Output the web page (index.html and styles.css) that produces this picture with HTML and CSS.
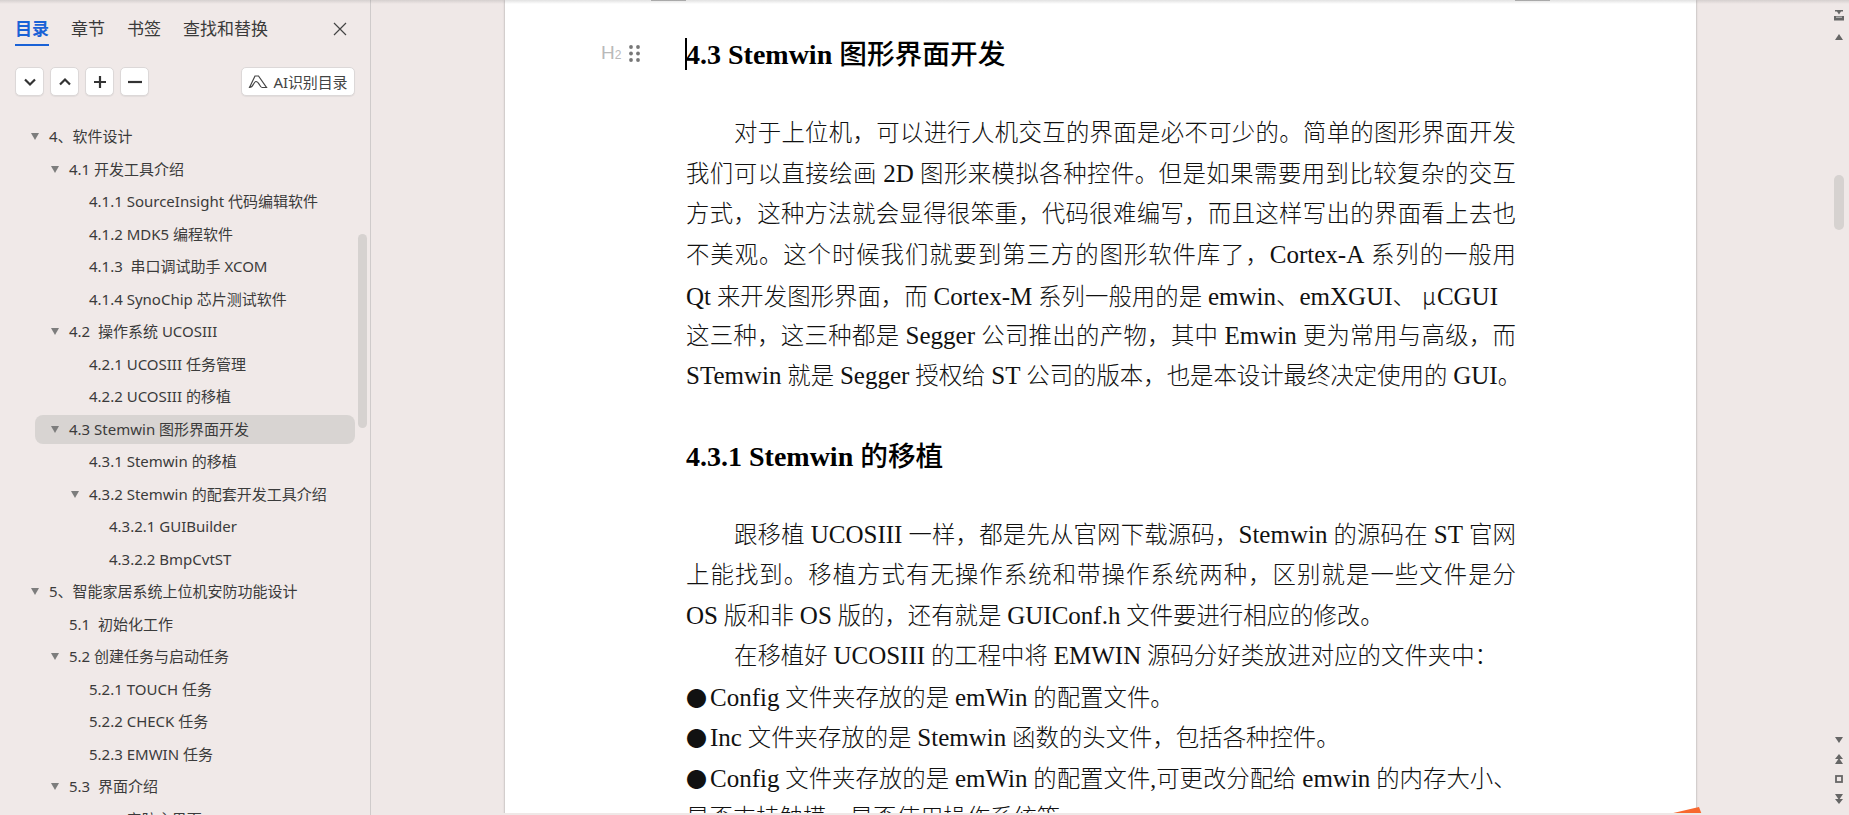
FILE: index.html
```html
<!DOCTYPE html>
<html lang="zh-CN">
<head>
<meta charset="utf-8">
<title>目录</title>
<link rel="stylesheet" href="styles.css">
</head>
<body>
<div class="app">
  <aside class="sidebar">
    <div class="tabs">
      <span class="tab tab-active">目录</span>
      <span class="tab">章节</span>
      <span class="tab">书签</span>
      <span class="tab">查找和替换</span>
      <svg class="close" width="14" height="14" viewBox="0 0 14 14"><path d="M1 1L13 13M13 1L1 13" stroke="#444" stroke-width="1.2" fill="none"/></svg>
    </div>
    <div class="tools">
      <button class="tool"><svg width="14" height="14" viewBox="0 0 14 14"><path d="M2 4.5L7 9.5L12 4.5" stroke="#333" stroke-width="2.2" fill="none"/></svg></button>
      <button class="tool"><svg width="14" height="14" viewBox="0 0 14 14"><path d="M2 9.5L7 4.5L12 9.5" stroke="#333" stroke-width="2.2" fill="none"/></svg></button>
      <button class="tool"><svg width="14" height="14" viewBox="0 0 14 14"><path d="M1 7H13M7 1V13" stroke="#333" stroke-width="2.2" fill="none"/></svg></button>
      <button class="tool"><svg width="16" height="14" viewBox="0 0 16 14"><path d="M1 7H15" stroke="#333" stroke-width="2.2" fill="none"/></svg></button>
      <button class="ai"><svg width="20" height="15" viewBox="0 0 20 15"><path d="M1.5 13.5L7 2H10.5L18.5 13.5H14C12 13.5 11 7.5 8 7.5C5.5 7.5 5.5 13.5 1.5 13.5Z" stroke="#444" stroke-width="1.2" fill="none"/></svg>AI识别目录</button>
    </div>
    <nav class="tree">
      <div class="row lv1"><i class="tri"></i>4、软件设计</div>
      <div class="row lv2"><i class="tri"></i>4.1 开发工具介绍</div>
      <div class="row lv3">4.1.1 SourceInsight 代码编辑软件</div>
      <div class="row lv3">4.1.2 MDK5 编程软件</div>
      <div class="row lv3">4.1.3&nbsp; 串口调试助手 XCOM</div>
      <div class="row lv3">4.1.4 SynoChip 芯片测试软件</div>
      <div class="row lv2"><i class="tri"></i>4.2&nbsp; 操作系统 UCOSIII</div>
      <div class="row lv3">4.2.1 UCOSIII 任务管理</div>
      <div class="row lv3">4.2.2 UCOSIII 的移植</div>
      <div class="row lv2 row-active"><i class="tri"></i>4.3 Stemwin 图形界面开发</div>
      <div class="row lv3">4.3.1 Stemwin 的移植</div>
      <div class="row lv3"><i class="tri"></i>4.3.2 Stemwin 的配套开发工具介绍</div>
      <div class="row lv4">4.3.2.1 GUIBuilder</div>
      <div class="row lv4">4.3.2.2 BmpCvtST</div>
      <div class="row lv1"><i class="tri"></i>5、智能家居系统上位机安防功能设计</div>
      <div class="row lv2">5.1&nbsp; 初始化工作</div>
      <div class="row lv2"><i class="tri"></i>5.2 创建任务与启动任务</div>
      <div class="row lv3">5.2.1 TOUCH 任务</div>
      <div class="row lv3">5.2.2 CHECK 任务</div>
      <div class="row lv3">5.2.3 EMWIN 任务</div>
      <div class="row lv2"><i class="tri"></i>5.3&nbsp; 界面介绍</div>
      <div class="row lv3">5.3.1 安防主界面</div>
    </nav>
    <div class="tree-thumb"></div>
  </aside>

  <main class="workspace">
    <article class="page">
      <i class="mark mark-left"></i><i class="mark mark-right"></i>
      <h2 class="h h-first">
        <span class="h-marker"><span class="h-tag">H<sub>2</sub></span>
          <svg width="11" height="17" viewBox="0 0 11 17"><g fill="#777"><circle cx="2" cy="2" r="1.9"/><circle cx="9" cy="2" r="1.9"/><circle cx="2" cy="8.5" r="1.9"/><circle cx="9" cy="8.5" r="1.9"/><circle cx="2" cy="15" r="1.9"/><circle cx="9" cy="15" r="1.9"/></g></svg>
        </span>
        <i class="caret"></i>4.3 Stemwin <span class="h-cjk">图形界面开发</span>
      </h2>
      <div class="para">
        <div class="line indent">对于上位机，可以进行人机交互的界面是必不可少的。简单的图形界面开发</div>
        <div class="line">我们可以直接绘画 <span class="la">2D</span> 图形来模拟各种控件。但是如果需要用到比较复杂的交互</div>
        <div class="line">方式，这种方法就会显得很笨重，代码很难编写，而且这样写出的界面看上去也</div>
        <div class="line">不美观。这个时候我们就要到第三方的图形软件库了，<span class="la">Cortex-A</span> 系列的一般用</div>
        <div class="line line-short"><span class="la">Qt</span> 来开发图形界面，而 <span class="la">Cortex-M</span> 系列一般用的是 <span class="la">emwin</span>、<span class="la">emXGUI</span>、 <span class="mu">μ</span><span class="la">CGUI</span></div>
        <div class="line">这三种，这三种都是 <span class="la">Segger</span> 公司推出的产物，其中 <span class="la">Emwin</span> 更为常用与高级，而</div>
        <div class="line"><span class="la">STemwin</span> 就是 <span class="la">Segger</span> 授权给 <span class="la">ST</span> 公司的版本，也是本设计最终决定使用的 <span class="la">GUI</span>。</div>
      </div>
      <h3 class="h h-second">4.3.1 Stemwin <span class="h-cjk">的移植</span></h3>
      <div class="para">
        <div class="line indent">跟移植 <span class="la">UCOSIII</span> 一样，都是先从官网下载源码，<span class="la">Stemwin</span> 的源码在 <span class="la">ST</span> 官网</div>
        <div class="line">上能找到。移植方式有无操作系统和带操作系统两种，区别就是一些文件是分</div>
        <div class="line line-end"><span class="la">OS</span> 版和非 <span class="la">OS</span> 版的，还有就是 <span class="la">GUIConf.h</span> 文件要进行相应的修改。</div>
        <div class="line line-end indent">在移植好 <span class="la">UCOSIII</span> 的工程中将 <span class="la">EMWIN</span> 源码分好类放进对应的文件夹中：</div>
        <div class="line line-end"><span class="dot">●</span><span class="la">Config</span> 文件夹存放的是 <span class="la">emWin</span> 的配置文件。</div>
        <div class="line line-end"><span class="dot">●</span><span class="la">Inc</span> 文件夹存放的是 <span class="la">Stemwin</span> 函数的头文件，包括各种控件。</div>
        <div class="line"><span class="dot">●</span><span class="la">Config</span> 文件夹存放的是 <span class="la">emWin</span> 的配置文件,可更改分配给 <span class="la">emwin</span> 的内存大小、</div>
        <div class="line line-end">是否支持触摸，是否使用操作系统等。</div>
      </div>
    </article>
    <div class="rail">
      <div class="rail-top">
        <svg width="10" height="11" viewBox="0 0 10 11"><path d="M1 0H9V1.5H7L5 4.5L3 1.5H1Z M0 6H10V10.5H0Z" fill="#666"/><path d="M3 6.5V8M5 6.5V8M7 6.5V8" stroke="#eee" stroke-width="1"/></svg>
        <svg width="8" height="6" viewBox="0 0 8 6"><path d="M4 0L8 6H0Z" fill="#666"/></svg>
      </div>
      <div class="rail-thumb"></div>
      <div class="rail-bottom">
        <svg width="8" height="6" viewBox="0 0 8 6"><path d="M0 0H8L4 6Z" fill="#666"/></svg>
        <svg width="8" height="10" viewBox="0 0 8 10"><path d="M4 0L8 5H0ZM4 4L8 10H0Z" fill="#666"/></svg>
        <svg width="8" height="8" viewBox="0 0 8 8"><rect x="1" y="1" width="6" height="6" fill="none" stroke="#666" stroke-width="1.8"/></svg>
        <svg width="8" height="10" viewBox="0 0 8 10"><path d="M0 0H8L4 6ZM0 5H8L4 10Z" fill="#666"/></svg>
      </div>
    </div>
    <svg class="corner" width="34" height="8" viewBox="0 0 34 8"><path d="M0 7L30 0L33 8H0Z" fill="#f7682f"/></svg>
  </main>
</div>
</body>
</html>
```

FILE: styles.css
```css
html, body {
  margin: 0;
  height: 100%;
  overflow: hidden;
}
body {
  background: #efe8e7;
  font-family: "Noto Sans", "Noto Sans CJK SC", sans-serif;
  color: #333;
}
.app {
  display: flex;
  height: 815px;
  position: relative;
}
.app::after {
  content: "";
  position: absolute;
  left: 0;
  right: 0;
  top: 0;
  height: 4px;
  background: linear-gradient(rgba(120, 120, 120, .22), rgba(120, 120, 120, 0));
  pointer-events: none;
}

/* sidebar */
.sidebar {
  width: 371px;
  flex: none;
  box-sizing: border-box;
  border-right: 1px solid #cfcbcb;
  background: #f0e9e8;
  position: relative;
  overflow: hidden;
}
.tabs {
  display: flex;
  align-items: flex-start;
  gap: 22px;
  padding: 16px 0 0 15px;
  height: 44px;
  box-sizing: border-box;
  position: relative;
}
.tab {
  font-size: 17px;
  line-height: 25px;
  height: 28px;
  color: #3a3a3a;
}
.tab-active {
  color: #1a62d6;
  font-weight: 700;
  border-bottom: 2px solid #1a62d6;
}
.close {
  position: absolute;
  left: 333px;
  top: 22px;
}
.tools {
  display: flex;
  gap: 6px;
  padding: 23px 15px 0 15px;
}
.tool, .ai {
  height: 29px;
  background: #fff;
  border: 1px solid #dcd8d8;
  border-radius: 5px;
  box-sizing: border-box;
  padding: 0;
  display: flex;
  align-items: center;
  justify-content: center;
  box-shadow: 0 1px 1px rgba(0, 0, 0, .06);
}
.tool {
  width: 29px;
}
.ai {
  margin-left: auto;
  width: 114px;
  gap: 5px;
  font: 15px "Noto Sans", "Noto Sans CJK SC", sans-serif;
  color: #444;
  letter-spacing: -.1px;
}
.tree {
  display: flex;
  flex-direction: column;
  gap: 3.5px;
  margin-top: 26px;
  width: 320px;
  margin-left: 35px;
  white-space: nowrap;
}
.row {
  height: 29px;
  flex: none;
  line-height: 29px;
  font-size: 15px;
  color: #3b3b3b;
  position: relative;
  border-radius: 8px;
}
.lv1 { padding-left: 14px; }
.lv2 { padding-left: 34px; }
.lv3 { padding-left: 54px; }
.lv4 { padding-left: 74px; }
.row-active {
  background: #d8d4d2;
}
.tri {
  position: absolute;
  top: 11px;
  width: 0;
  height: 0;
  border-left: 4.5px solid transparent;
  border-right: 4.5px solid transparent;
  border-top: 7px solid #7d7d7d;
}
.lv1 .tri { left: -4px; }
.lv2 .tri { left: 16px; }
.lv3 .tri { left: 36px; }
.tree-thumb {
  position: absolute;
  left: 358px;
  top: 234px;
  width: 9px;
  height: 194px;
  border-radius: 5px;
  background: #d6d2d0;
}

/* document */
.workspace {
  flex: 1;
  min-width: 0;
  display: flex;
  padding-left: 134px;
  position: relative;
  overflow: hidden;
  border-bottom: 2px solid transparent;
}
.workspace::after {
  content: "";
  position: absolute;
  left: 1326px;
  right: 0;
  bottom: -1px;
  height: 1px;
  background: #c3cedb;
}
.page {
  width: 1191px;
  flex: none;
  box-sizing: border-box;
  height: 900px;
  padding: 0 180px 0 181px;
  background: #fff;
  position: relative;
  box-shadow: 0 0 2px rgba(90, 90, 90, .55);
  font-family: "Liberation Serif", "Noto Sans CJK SC", serif;
  color: #000;
}
.mark {
  position: absolute;
  top: 0;
  width: 35px;
  height: 1px;
  background: #b5b5b5;
}
.mark-left { left: 146px; }
.mark-right { right: 146px; }
.h {
  margin: 0;
  font-size: 28px;
  font-weight: 700;
  line-height: 36px;
  position: relative;
}
.h-cjk {
  font-family: "Noto Sans CJK SC", sans-serif;
  font-weight: 500;
  font-size: 27.7px;
}
.h-first {
  padding-top: 34px;
}
.h-second {
  margin-top: 39px;
}
.h-marker {
  position: absolute;
  left: -85px;
  top: 44px;
  display: flex;
  align-items: center;
  gap: 8px;
}
.h-tag {
  font: 400 19px "Liberation Sans", sans-serif;
  line-height: 18px;
  color: #b9b9b9;
  display: flex;
  align-items: flex-end;
}
.h-tag sub {
  font-size: 12px;
  line-height: 13px;
  vertical-align: baseline;
}
.caret {
  position: absolute;
  left: -1px;
  top: 38px;
  width: 2px;
  height: 32px;
  background: #000;
}
.para {
  margin-top: 40px;
  font-size: 23.4px;
  font-weight: 300;
  color: #111;
}
.h-second + .para {
  margin-top: 40px;
}
.line {
  height: 40.5px;
  line-height: 40.5px;
  text-align: justify;
  text-align-last: justify;
  white-space: nowrap;
}
.la {
  font-size: 25px;
  font-weight: 400;
}
.mu {
  font-family: "Noto Sans CJK SC", sans-serif;
  display: inline-block;
  width: 15px;
}
.line-short {
  padding-right: 18px;
}
.line-end {
  text-align-last: left;
}
.indent {
  padding-left: 48px;
}
.dot {
  display: inline-block;
  width: 24px;
  font-family: "Noto Sans CJK SC", sans-serif;
  font-size: 21px;
}

/* right rail */
.rail {
  position: absolute;
  right: 5px;
  top: 0;
  bottom: 0;
  width: 10px;
  display: flex;
  flex-direction: column;
  align-items: center;
}
.rail-top {
  display: flex;
  flex-direction: column;
  align-items: center;
  gap: 13px;
  padding-top: 10px;
}
.rail-thumb {
  margin-top: 135px;
  width: 10px;
  height: 55px;
  flex: none;
  border-radius: 5px;
  background: #d6d2d0;
}
.rail-bottom {
  margin-top: auto;
  display: flex;
  flex-direction: column;
  align-items: center;
  gap: 11px;
  padding-bottom: 9px;
}
.corner {
  position: absolute;
  left: 1298px;
  bottom: -2px;
}
```
